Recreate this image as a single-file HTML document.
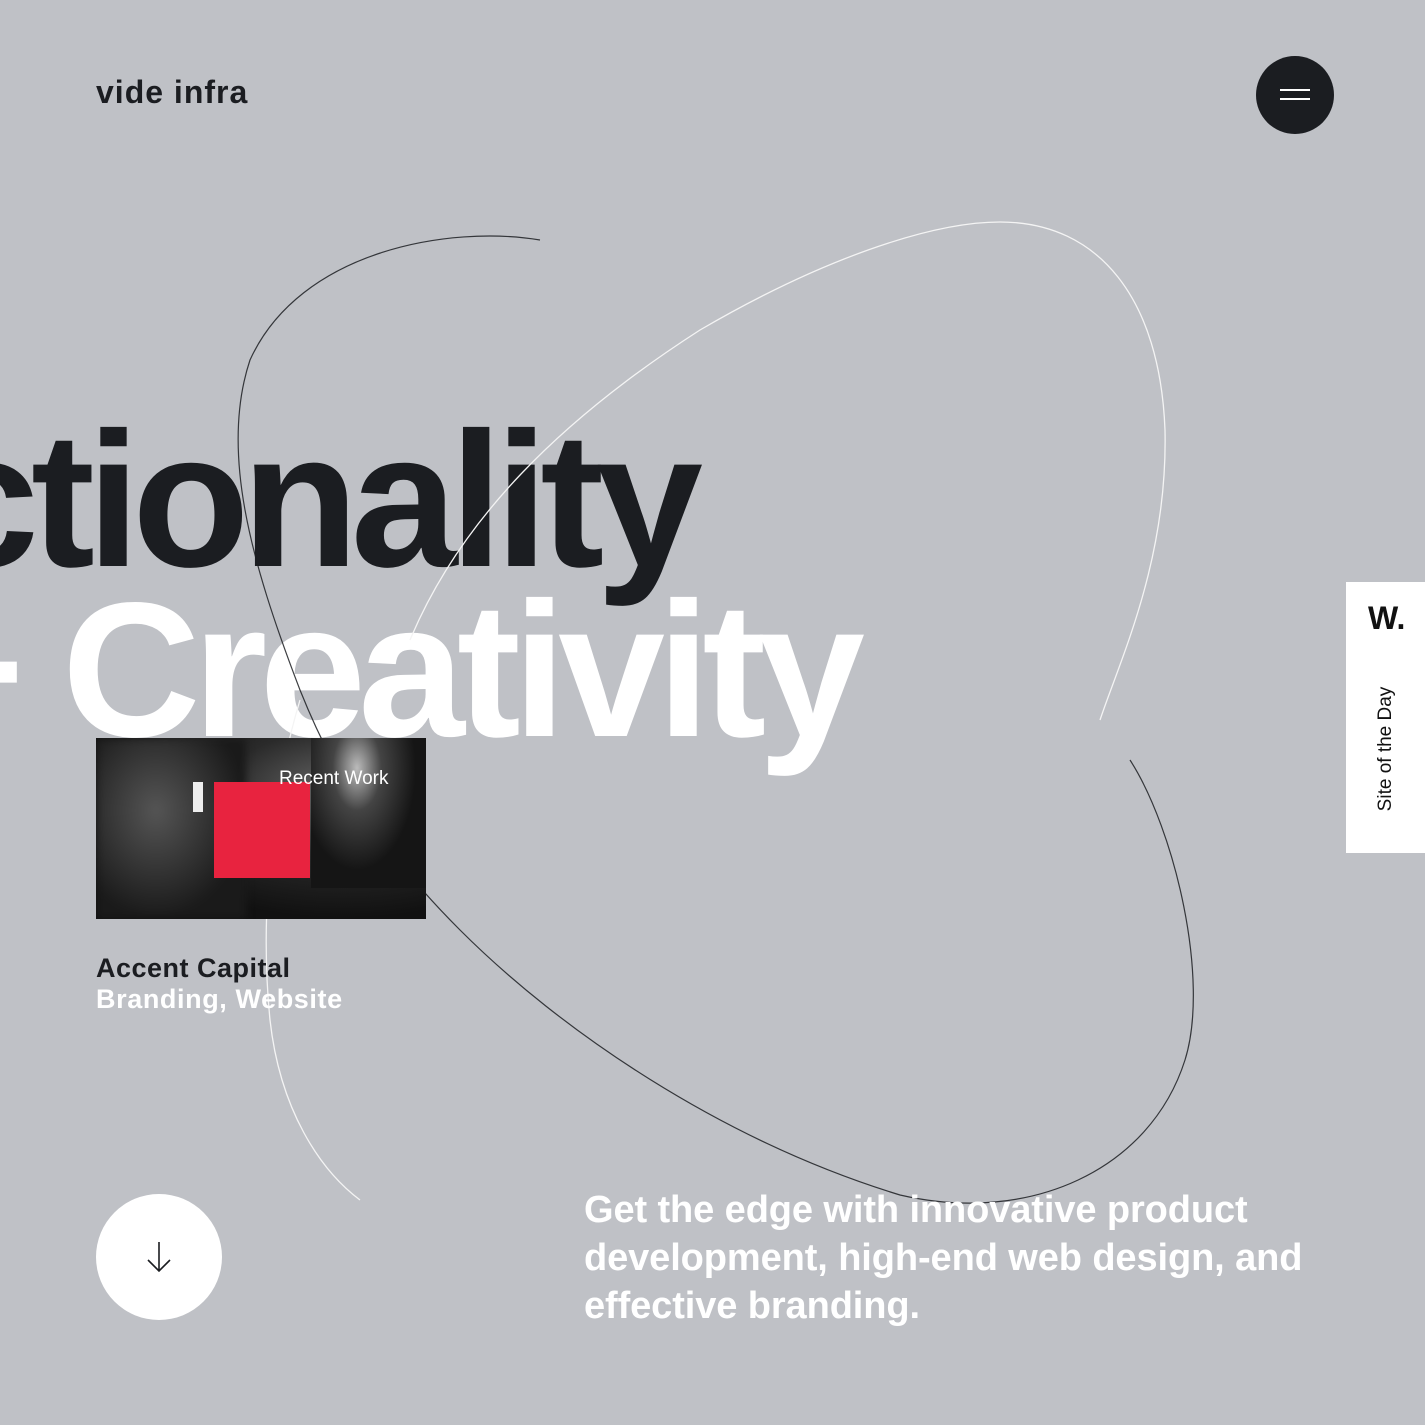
<!DOCTYPE html>
<html><head><style>
body{margin:0;width:1425px;height:1425px;background:#bfc1c6;overflow:hidden;position:relative;font-family:"Liberation Sans",sans-serif}
.abs{position:absolute}
.h{position:absolute;font-weight:700;font-size:192px;letter-spacing:-8px;white-space:nowrap;line-height:1}
</style></head><body>
<div class="abs" style="left:96px;top:74px;font-size:32px;font-weight:700;color:#1b1d21;letter-spacing:1px">vide infra</div>
<div class="abs" style="left:1256px;top:56px;width:78px;height:78px;border-radius:50%;background:#1b1d21">
<div class="abs" style="left:24px;top:33px;width:30px;height:2px;background:#fff"></div>
<div class="abs" style="left:24px;top:42px;width:30px;height:2px;background:#fff"></div></div>

<div class="h" style="right:730px;top:404px;color:#1b1d21">Functionality</div>
<div class="h" style="right:568px;top:574px;color:#fff">+ Creativity</div>

<svg class="abs" style="left:0;top:0" width="1425" height="1425">
<path d="M540,240 C450,225 300,250 250,360 C220,450 250,560 300,690 C340,790 390,860 460,930 C560,1030 720,1140 900,1195 C1030,1225 1150,1170 1185,1060 C1210,980 1175,830 1130,760" fill="none" stroke="#1b1d21" stroke-width="1.2" opacity="0.85"/>
<path d="M410,640 C460,520 560,420 700,330 C820,260 930,222 1000,222 C1100,222 1160,300 1165,430 C1168,560 1120,660 1100,720 M300,700 C270,800 260,920 270,1020 C280,1110 320,1170 360,1200" fill="none" stroke="#f4f4f4" stroke-width="1.3"/>
</svg>

<div class="abs" style="left:96px;top:738px;width:330px;height:181px;background:radial-gradient(ellipse at 75% 30%,#6a6a6a 0,#2a2a2a 35%,#111 70%),#1a1a1a;overflow:hidden">
<div class="abs" style="left:0;top:0;width:150px;height:181px;background:radial-gradient(ellipse at 40% 40%,#555,#1a1a1a 70%);filter:blur(4px)"></div>
<div class="abs" style="left:215px;top:0;width:115px;height:150px;background:radial-gradient(ellipse at 40% 20%,#bbb 0,#444 25%,#151515 60%)"></div>
<div class="abs" style="left:97px;top:44px;width:10px;height:30px;background:#eee"></div>
<div class="abs" style="left:118px;top:44px;width:96px;height:96px;background:#e8233f"></div>
<div class="abs" style="left:183px;top:30px;font-size:19px;color:#fff">Recent Work</div>
</div>
<div class="abs" style="left:96px;top:953px;font-size:27px;font-weight:700;color:#1b1d21;letter-spacing:0.5px">Accent Capital</div>
<div class="abs" style="left:96px;top:984px;font-size:27px;font-weight:700;color:#fff;letter-spacing:0.6px">Branding, Website</div>

<div class="abs" style="left:96px;top:1194px;width:126px;height:126px;border-radius:50%;background:#fff">
<svg class="abs" style="left:48px;top:46px" width="30" height="34"><path d="M15 2V31M4 20L15 31L26 20" fill="none" stroke="#1b1d21" stroke-width="1.6"/></svg></div>

<div class="abs" style="left:584px;top:1186px;font-size:38px;font-weight:700;color:#fff;line-height:48px;letter-spacing:-0.1px;width:820px">Get the edge with innovative product<br>development, high-end web design, and<br>effective branding.</div>

<div class="abs" style="left:1346px;top:582px;width:79px;height:271px;background:#fff;overflow:hidden">
<div class="abs" style="left:22px;top:18px;font-size:32px;font-weight:700;color:#111">W.</div>
<div class="abs" style="left:-25px;top:156px;width:130px;transform:rotate(-90deg);font-size:19px;color:#111;text-align:center;white-space:nowrap">Site of the Day</div>
</div>
</body></html>
